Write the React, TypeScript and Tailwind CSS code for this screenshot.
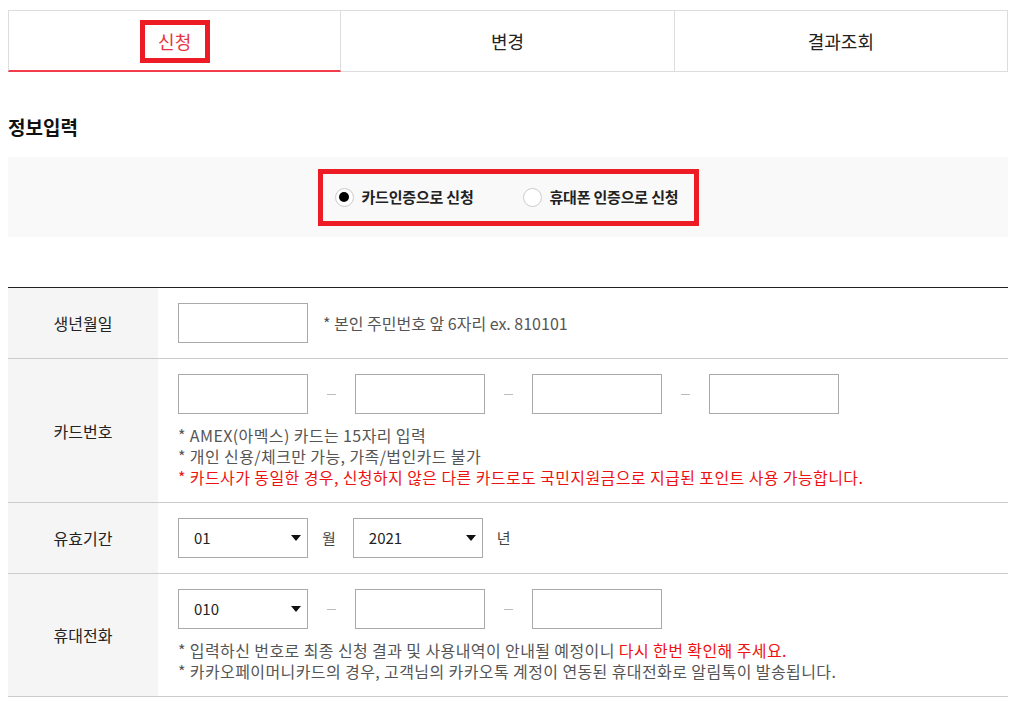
import React from "react";

const tabs = ["신청", "변경", "결과조회"];

function Dash() {
  return (
    <span className="flex w-[47px] justify-center">
      <span className="block h-px w-[9px] bg-[#bbbbbb]" />
    </span>
  );
}

function Box() {
  return <div className="h-[40px] w-[130px] border border-[#aaaaaa] bg-white" />;
}

function Select({ value }: { value: string }) {
  return (
    <div className="flex h-[40px] w-[130px] items-center justify-between border border-[#aaaaaa] bg-white pl-[15px] pr-[6px] text-[15px] text-[#222]">
      <span>{value}</span>
      <svg width="10" height="6" viewBox="0 0 10 6">
        <path d="M0 0h10L5 6z" fill="#111" />
      </svg>
    </div>
  );
}

function Row({ label, children }: { label: string; children: React.ReactNode }) {
  return (
    <div className="flex border-b border-[#cccccc]">
      <div className="flex w-[150px] shrink-0 items-center justify-center bg-[#f5f5f5] text-[16px] text-[#222]">
        {label}
      </div>
      <div className="flex-1 pl-[20px] pt-[15px] pb-[15px]">{children}</div>
    </div>
  );
}

export default function App() {
  return (
    <div
      className="min-h-[710px] bg-white px-[8px] pt-[10px] text-[#333]"
      style={{ fontFamily: '"Noto Sans CJK KR", "Noto Sans", sans-serif' }}
    >
      {/* tabs */}
      <div className="grid grid-cols-3">
        {tabs.map((t, i) => (
          <div
            key={t}
            className={`flex h-[62px] items-center justify-center border-t border-r border-[#dddddd] text-[18px] ${
              i === 0 ? "border-l border-b-2 border-b-[#f03c4b] text-[#e8333f]" : "border-b text-[#222]"
            }`}
          >
            {i === 0 ? (
              <span className="mt-[2px] flex h-[43px] w-[70px] items-center justify-center border-[5px] border-[#ed1c24]">
                {t}
              </span>
            ) : (
              t
            )}
          </div>
        ))}
      </div>

      <h2 className="mt-[42px] text-[19px] font-bold leading-[26px] text-[#111]">정보입력</h2>

      <div className="mt-[17px] flex h-[80px] items-center justify-center bg-[#f9f9f9]">
        <div className="flex h-[57px] w-[381px] items-center border-[5px] border-[#ed1c24] pl-[12px] text-[15px] font-bold tracking-[-0.2px] text-[#222]">
          <label className="flex items-center">
            <span className="flex h-[19px] w-[19px] items-center justify-center rounded-full border border-[#cccccc] bg-white">
              <span className="block h-[10px] w-[10px] rounded-full bg-black" />
            </span>
            <span className="ml-[8px]">카드인증으로 신청</span>
          </label>
          <label className="ml-[49px] flex items-center">
            <span className="block h-[19px] w-[19px] rounded-full border border-[#cccccc] bg-white" />
            <span className="ml-[8px]">휴대폰 인증으로 신청</span>
          </label>
        </div>
      </div>

      <div className="mt-[50px] border-t border-[#222]">
        <Row label="생년월일">
          <div className="flex items-center">
            <Box />
            <span className="ml-[15px] text-[16px] text-[#555]">* 본인 주민번호 앞 6자리 ex. 810101</span>
          </div>
        </Row>

        <Row label="카드번호">
          <div className="flex items-center">
            <Box />
            <Dash />
            <Box />
            <Dash />
            <Box />
            <Dash />
            <Box />
          </div>
          <div className="mt-[11px] -mb-px text-[16px] leading-[21px] tracking-[0.4px] text-[#555]">
            <p>* AMEX(아멕스) 카드는 15자리 입력</p>
            <p>* 개인 신용/체크만 가능, 가족/법인카드 불가</p>
            <p className="text-[#ee1111]">
              * 카드사가 동일한 경우, 신청하지 않은 다른 카드로도 국민지원금으로 지급된 포인트 사용 가능합니다.
            </p>
          </div>
        </Row>

        <Row label="유효기간">
          <div className="flex items-center text-[15px] text-[#444]">
            <Select value="01" />
            <span className="ml-[14px] mr-[17px]">월</span>
            <Select value="2021" />
            <span className="ml-[14px]">년</span>
          </div>
        </Row>

        <Row label="휴대전화">
          <div className="flex items-center">
            <Select value="010" />
            <Dash />
            <Box />
            <Dash />
            <Box />
          </div>
          <div className="mt-[11px] -mb-px text-[16px] leading-[21px] tracking-[0.4px] text-[#555]">
            <p>
              * 입력하신 번호로 최종 신청 결과 및 사용내역이 안내될 예정이니{" "}
              <span className="text-[#ee1111]">다시 한번 확인해 주세요.</span>
            </p>
            <p>* 카카오페이머니카드의 경우, 고객님의 카카오톡 계정이 연동된 휴대전화로 알림톡이 발송됩니다.</p>
          </div>
        </Row>
      </div>
    </div>
  );
}
